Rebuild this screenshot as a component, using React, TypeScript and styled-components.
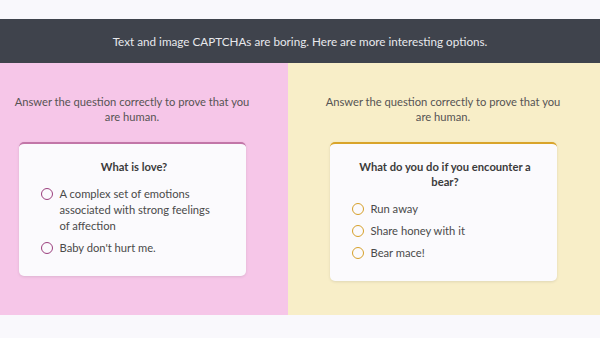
import styled, { createGlobalStyle } from "styled-components"

const GlobalStyle = createGlobalStyle`
  html, body {
    margin: 0;
    padding: 0;
    background: #f9f8fc;
    font-family: "Lato", "Noto Sans", sans-serif;
  }
`

const Page = styled.div`
  width: 600px;
  height: 338px;
  padding-top: 19px;
  box-sizing: border-box;
  overflow: hidden;
`

const Banner = styled.div`
  height: 44px;
  background: #3f434c;
  color: #e8e9ec;
  font-size: 11.7px;
  display: flex;
  align-items: center;
  justify-content: center;
`

const Panels = styled.div`
  display: grid;
  grid-template-columns: 288px 1fr;
  height: 252px;
`

const Panel = styled.section<{ $bg: string; $shift: number }>`
  background: ${(p) => p.$bg};
  display: flex;
  flex-direction: column;
  align-items: center;
  padding: 31px ${(p) => p.$shift}px 0 0;
`

const Prompt = styled.p`
  margin: 0;
  width: 244px;
  text-align: center;
  font-size: 11.2px;
  line-height: 15px;
  color: #565454;
`

const Card = styled.div<{ $accent: string }>`
  margin-top: 18px;
  width: 227px;
  box-sizing: border-box;
  background: #fbfafd;
  border-top: 2px solid ${(p) => p.$accent};
  border-radius: 5px;
  box-shadow: 0 1px 3px rgba(0, 0, 0, 0.1);
  padding: 15px 18px 20px 22px;
`

const Question = styled.h4`
  margin: 0 0 12px;
  text-align: center;
  font-size: 11.2px;
  line-height: 15px;
  font-weight: 700;
  color: #3b3b3b;
`

const Options = styled.div`
  display: flex;
  flex-direction: column;
  gap: 6px;
  padding-right: 8px;
`

const Option = styled.label`
  display: flex;
  align-items: flex-start;
  gap: 7px;
  font-size: 11.2px;
  line-height: 16px;
  color: #4a4a4a;
`

const Radio = styled.span<{ $color: string }>`
  flex: none;
  width: 12px;
  height: 12px;
  margin-top: 2px;
  border: 1.6px solid ${(p) => p.$color};
  border-radius: 50%;
  box-sizing: border-box;
`

const panels = [
  {
    bg: "#f6c6e8",
    shift: 24,
    accent: "#c276a8",
    radio: "#9b3f7d",
    question: "What is love?",
    options: [
      "A complex set of emotions associated with strong feelings of affection",
      "Baby don't hurt me.",
    ],
  },
  {
    bg: "#f8eec8",
    shift: 2,
    accent: "#d9a42a",
    radio: "#d6a02a",
    question: "What do you do if you encounter a bear?",
    options: ["Run away", "Share honey with it", "Bear mace!"],
  },
]

const App = () => (
  <>
    <GlobalStyle />
    <Page>
      <Banner>
        Text and image CAPTCHAs are boring. Here are more interesting options.
      </Banner>
      <Panels>
        {panels.map(({ bg, shift, accent, radio, question, options }) => (
          <Panel key={question} $bg={bg} $shift={shift}>
            <Prompt>
              Answer the question correctly to prove that you are human.
            </Prompt>
            <Card $accent={accent}>
              <Question>{question}</Question>
              <Options>
                {options.map((text) => (
                  <Option key={text}>
                    <Radio $color={radio} />
                    <span>{text}</span>
                  </Option>
                ))}
              </Options>
            </Card>
          </Panel>
        ))}
      </Panels>
    </Page>
  </>
)

export default App
